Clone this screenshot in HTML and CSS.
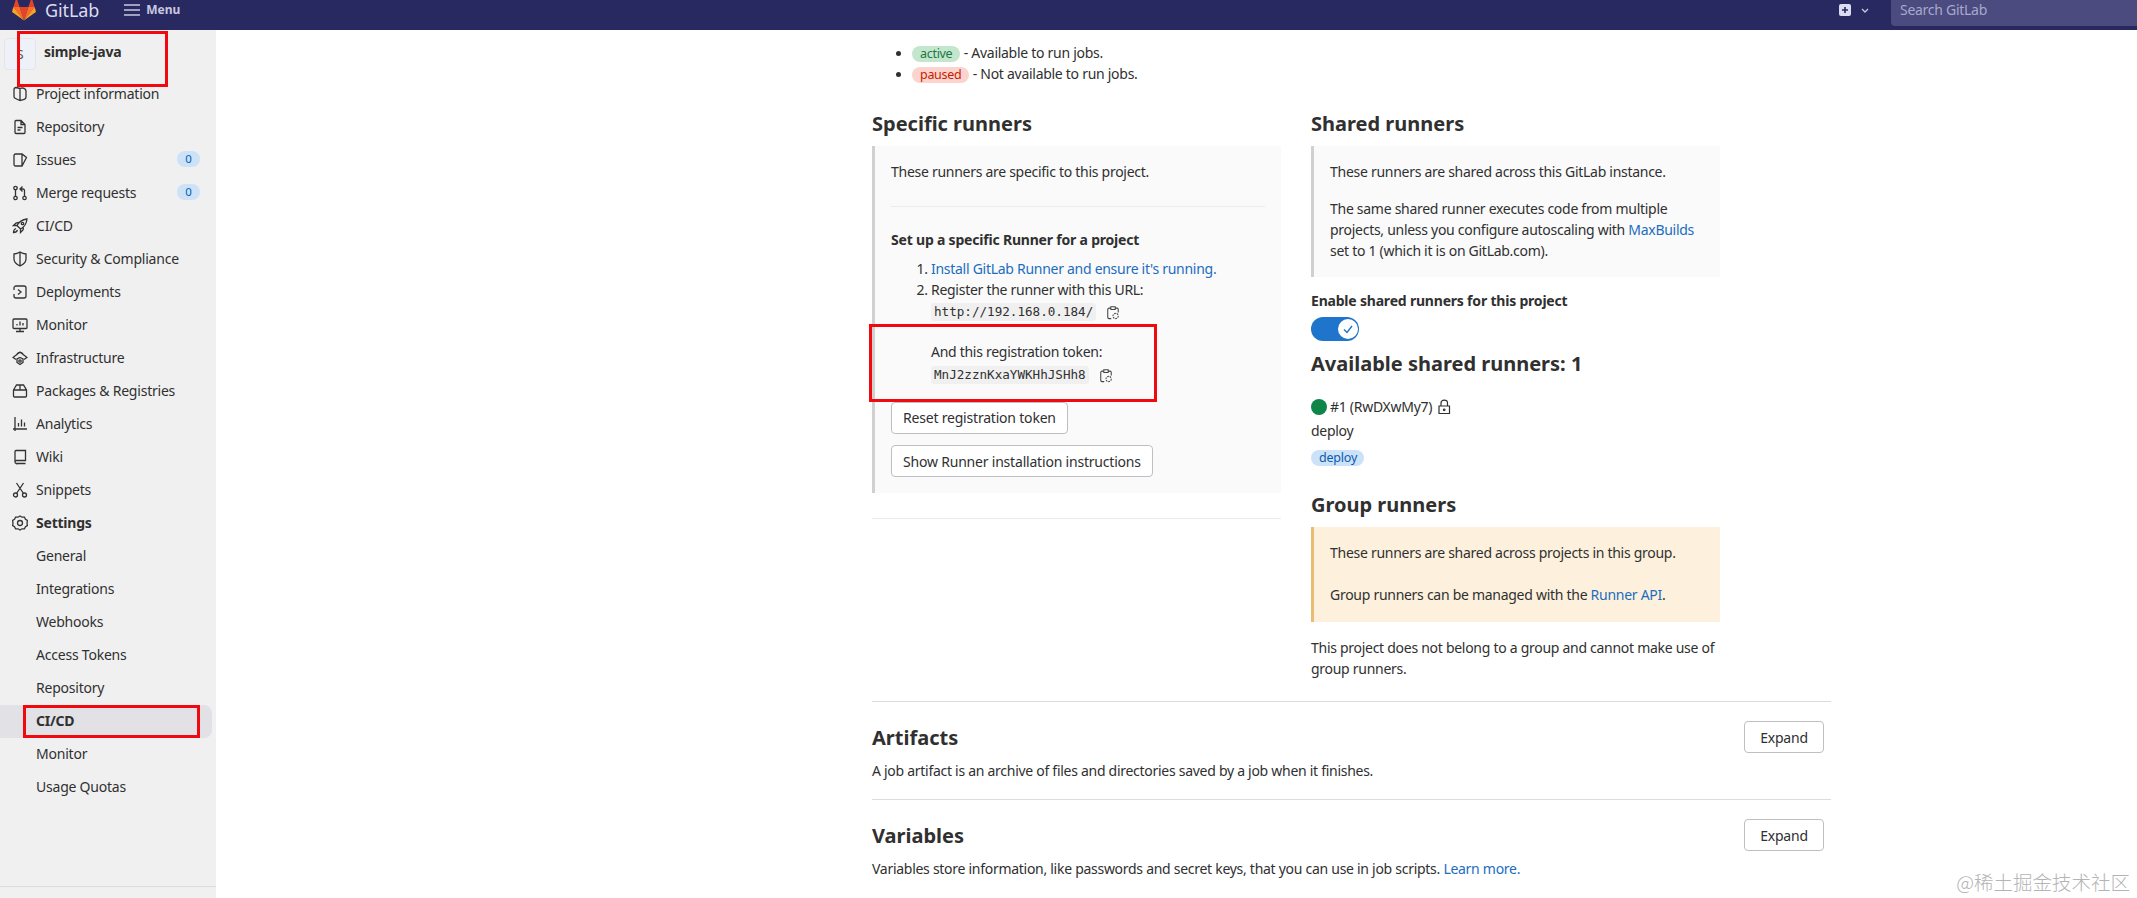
FILE: index.html
```html
<!DOCTYPE html>
<html lang="en">
<head>
<meta charset="utf-8">
<title>CI/CD Settings · simple-java · GitLab</title>
<link rel="stylesheet" href="styles.css">
</head>
<body>
<header class="topbar">
  <svg class="logo" viewBox="0 0 24 22" width="24" height="22">
    <path fill="#e24329" d="M12 21.5 16.4 8H7.6z"/>
    <path fill="#fc6d26" d="M12 21.5 7.6 8H1.4z"/>
    <path fill="#fca326" d="M1.4 8 .1 12.2c-.1.4 0 .8.4 1.1L12 21.5z"/>
    <path fill="#e24329" d="M1.4 8h6.2L4.9-.3c-.1-.4-.7-.4-.9 0z"/>
    <path fill="#fc6d26" d="M12 21.5 16.4 8h6.2z"/>
    <path fill="#fca326" d="m22.6 8 1.3 4.2c.1.4 0 .8-.4 1.1L12 21.5z"/>
    <path fill="#e24329" d="M22.6 8h-6.2l2.7-8.3c.1-.4.7-.4.9 0z"/>
  </svg>
  <span class="brand">GitLab</span>
  <svg class="burger" viewBox="0 0 16 12" width="16" height="12"><path d="M0 1h16M0 6h16M0 11h16" stroke="#c9c8e0" stroke-width="1.5" fill="none"/></svg>
  <span class="menu">Menu</span>
  <span class="spacer"></span>
  <svg class="plus" viewBox="0 0 12 12" width="12" height="12"><rect width="12" height="12" rx="2" fill="#dcdcf0"/><path d="M6 3v6M3 6h6" stroke="#292961" stroke-width="1.6"/></svg>
  <svg class="chev" viewBox="0 0 8 5" width="8" height="5"><path d="m1 1 3 3 3-3" stroke="#c9c8e0" stroke-width="1.3" fill="none"/></svg>
  <div class="search">Search GitLab</div>
</header>

<div class="layout">
  <aside class="sidebar">
    <div class="project">
      <span class="avatar">S</span>
      <strong class="project-name">simple-java</strong>
    </div>
    <nav class="nav">
      <a class="item"><svg class="icon" viewBox="0 0 16 16"><path d="M8 2.5 4 1.5c-1 0-2 .6-2 2v7c0 1 .6 1.7 1.5 2L8 14.5l2.5-.6c2-.5 3.5-1 3.5-3v-6c0-2-1.500-2.500-3.500-3zM8 2.500v12"/></svg>Project information</a>
      <a class="item"><svg class="icon" viewBox="0 0 16 16"><path d="M3 2.500c0-.6.4-1 1-1h5l4 4v8c0 .6-.4 1-1 1H4c-.6 0-1-.4-1-1zM9 1.500v4h4M5.500 8.500h5M5.500 11h3"/></svg>Repository</a>
      <a class="item"><svg class="icon" viewBox="0 0 16 16"><path d="M2 3.500c0-.9.6-1.500 1.500-1.500h6.500l4.500 3.500L10 14H3.500C2.600 14 2 13.400 2 12.500zM10 2v12"/></svg>Issues<span class="count">0</span></a>
      <a class="item"><svg class="icon" viewBox="0 0 16 16"><circle cx="3.500" cy="3" r="1.700"/><circle cx="3.500" cy="13" r="1.700"/><circle cx="12.500" cy="13" r="1.700"/><path d="M3.500 4.700v6.600M12.500 11.300V5.500c0-1-.6-1.500-1.500-1.500H8.500M10.500 1.500 8 4l2.500 2.500"/></svg>Merge requests<span class="count">0</span></a>
      <a class="item"><svg class="icon" viewBox="0 0 16 16"><path d="M5 7.500C7 3.500 10.500 1.500 15 1c-.5 4.500-2.500 8-6.500 10L5 7.500zM5 7.500H1.500L4 5l2.500-.5M8.500 11v3.500L11 12l.5-2.500M4 10.500c-1.500.5-2.500 2-2.500 4 2 0 3.500-1 4-2.500"/><circle cx="10.500" cy="5.500" r="1.200"/></svg>CI/CD</a>
      <a class="item"><svg class="icon" viewBox="0 0 16 16"><path d="M8 1c2 1.200 4 1.800 6 2v5c0 3.500-2.500 5.500-6 7-3.500-1.500-6-3.500-6-7V3c2-.2 4-.8 6-2zM8 1v14"/></svg>Security &amp; Compliance</a>
      <a class="item"><svg class="icon" viewBox="0 0 16 16"><path d="M2 6V4c0-1 .8-2 2-2h8c1.200 0 2 1 2 2v8c0 1.200-.8 2-2 2H4c-1.200 0-2-.8-2-2v-2M6 5.500 9 8l-3 2.500M1 8h0"/></svg>Deployments</a>
      <a class="item"><svg class="icon" viewBox="0 0 16 16"><rect x="1" y="2" width="14" height="9.500" rx="1"/><path d="M8 11.500V14M4 14.500h8M5 8.500V7M8 8.500V4.500M11 8.500V6"/></svg>Monitor</a>
      <a class="item"><svg class="icon" viewBox="0 0 16 16"><path d="M4 9.500 1 7.500 8 2l7 5.500-3 2M8 2.500c2 0 3.500 1.500 3.500 3M4.500 5.500C4.500 4 6 2.500 8 2.500"/><path d="M8 7.500 11 9v3.500l-3 2-3-2V9z"/><circle cx="8" cy="11" r="1.200"/></svg>Infrastructure</a>
      <a class="item"><svg class="icon" viewBox="0 0 16 16"><path d="M1.500 7 4.500 2h7l3 5v6c0 .6-.4 1-1 1h-11c-.6 0-1-.4-1-1zM1.500 7h13M8 2v5"/></svg>Packages &amp; Registries</a>
      <a class="item"><svg class="icon" viewBox="0 0 16 16"><path d="M3 1v14M1 13h14M6.500 10.500V7M9.500 10.500V3.500M12.500 10.500V6.500"/></svg>Analytics</a>
      <a class="item"><svg class="icon" viewBox="0 0 16 16"><path d="M3 13V2.500c0-.6.400-1 1-1h9.500v10H4.500C3.600 11.500 3 12.100 3 13s.6 1.500 1.500 1.500h9M5 14.500v1"/></svg>Wiki</a>
      <a class="item"><svg class="icon" viewBox="0 0 16 16"><circle cx="3.500" cy="13" r="2"/><circle cx="12.500" cy="13" r="2"/><path d="M4.500 1 11.500 11.500M11.500 1 4.500 11.500"/></svg>Snippets</a>
      <a class="item strong"><svg class="icon" viewBox="0 0 16 16"><path d="M8 1l2 1.200 2.400-.1 1.100 2.100 1.900 1.300L15 8l.4 2.500-1.900 1.300-1.100 2.100-2.400-.1L8 15l-2-1.200-2.400.1-1.100-2.100L.6 10.500 1 8 .6 5.500l1.900-1.300 1.100-2.100L6 2.200z"/><circle cx="8" cy="8" r="2.500"/></svg>Settings</a>
      <a class="item sub">General</a>
      <a class="item sub">Integrations</a>
      <a class="item sub">Webhooks</a>
      <a class="item sub">Access Tokens</a>
      <a class="item sub">Repository</a>
      <a class="item sub active">CI/CD</a>
      <a class="item sub">Monitor</a>
      <a class="item sub">Usage Quotas</a>
    </nav>
    <div class="sidebar-foot"></div>
  </aside>

  <main class="main">
    <ul class="states">
      <li><span class="pill green">active</span> - Available to run jobs.</li>
      <li><span class="pill red">paused</span> - Not available to run jobs.</li>
    </ul>

    <div class="columns">
      <section class="col">
        <h3 class="title">Specific runners</h3>
        <div class="note">
          <p class="para">These runners are specific to this project.</p>
          <hr class="rule">
          <p class="para bold">Set up a specific Runner for a project</p>
          <ol class="steps">
            <li><a class="link">Install GitLab Runner and ensure it's running.</a></li>
            <li>Register the runner with this URL:
              <div class="codeline url"><code class="code">http://192.168.0.184/</code><svg class="copy" viewBox="0 0 16 16"><path d="M5 3H3.500C2.700 3 2 3.700 2 4.500v9c0 .8.7 1.500 1.500 1.500H6M11 3h1.500c.8 0 1.500.7 1.500 1.500V8M5.500 1.500h5V4.500h-5z"/><circle cx="11" cy="12" r="3" stroke-dasharray="2 1"/></svg></div>
              <div class="token-label">And this registration token:</div>
              <div class="codeline"><code class="code">MnJ2zznKxaYWKHhJSHh8</code><svg class="copy" viewBox="0 0 16 16"><path d="M5 3H3.500C2.700 3 2 3.700 2 4.500v9c0 .8.7 1.500 1.500 1.500H6M11 3h1.500c.8 0 1.500.7 1.500 1.500V8M5.500 1.500h5V4.500h-5z"/><circle cx="11" cy="12" r="3" stroke-dasharray="2 1"/></svg></div>
            </li>
          </ol>
          <button class="btn first">Reset registration token</button>
          <button class="btn">Show Runner installation instructions</button>
        </div>
        <hr class="rule end">
      </section>

      <section class="col">
        <h3 class="title">Shared runners</h3>
        <div class="note">
          <p class="para">These runners are shared across this GitLab instance.</p>
          <p class="para gap">The same shared runner executes code from multiple projects, unless you configure autoscaling with <a class="link">MaxBuilds</a> set to 1 (which it is on GitLab.com).</p>
        </div>
        <p class="para bold enable">Enable shared runners for this project</p>
        <div class="toggle"><span class="knob"><svg viewBox="0 0 12 12" width="12" height="12"><path d="m2 6.500 3 3 5-6.500" stroke="#1f75cb" stroke-width="1.400" fill="none"/></svg></span></div>
        <h3 class="title avail">Available shared runners: 1</h3>
        <div class="runner"><span class="dot"></span>#1 (RwDXwMy7)<svg class="lock" viewBox="0 0 14 16"><path d="M2 7h10.500v7.500H2zM4 7V4c0-1.500 1.300-2.800 3.200-2.800S10.500 2.500 10.500 4v3"/><circle cx="7.200" cy="10.800" r=".8"/></svg></div>
        <p class="para runner-desc">deploy</p>
        <span class="tag">deploy</span>
        <h3 class="title group">Group runners</h3>
        <div class="note warn">
          <p class="para">These runners are shared across projects in this group.</p>
          <p class="para gap-w">Group runners can be managed with the <a class="link">Runner API</a>.</p>
        </div>
        <p class="para after">This project does not belong to a group and cannot make use of group runners.</p>
      </section>
    </div>

    <section class="setting">
      <div class="setting-head"><h3 class="title">Artifacts</h3><button class="btn expand">Expand</button></div>
      <p class="para desc">A job artifact is an archive of files and directories saved by a job when it finishes.</p>
    </section>
    <section class="setting">
      <div class="setting-head"><h3 class="title">Variables</h3><button class="btn expand">Expand</button></div>
      <p class="para desc">Variables store information, like passwords and secret keys, that you can use in job scripts. <a class="link">Learn more.</a></p>
    </section>
  </main>
</div>

<div class="mark mark-project"></div>
<div class="mark mark-cicd"></div>
<div class="mark mark-token"></div>
<div class="watermark">@稀土掘金技术社区</div>
</body>
</html>
```

FILE: styles.css
```css
* { box-sizing: border-box; }
html, body { height: 100%; }
body {
  margin: 0;
  overflow: hidden;
  height: 898px;
  background: #fff;
  color: #303030;
  font-family: "Noto Sans", "Open Sans", sans-serif;
  font-size: 14px;
  line-height: 21px;
  letter-spacing: -0.28px;
}
.link { color: #1a6dc0; }

.topbar {
  height: 30px;
  background: #292961;
  display: flex;
  align-items: flex-start;
  padding-left: 12px;
  overflow: hidden;
  color: #d1d0e3;
}
.logo { flex: none; margin-top: -1px; }
.brand { margin-left: 9px; font-size: 18px; line-height: 20px; letter-spacing: -0.1px; color: #dcdcef; }
.burger { margin-left: 25px; margin-top: 4px; }
.menu { margin-left: 6px; font-size: 12px; font-weight: 700; line-height: 20px; letter-spacing: 0; color: #c9c8e0; }
.spacer { flex: 1; }
.plus { margin-top: 4px; }
.chev { margin-left: 10px; margin-top: 8px; }
.search {
  width: 246px;
  height: 26px;
  margin-left: 22px;
  padding-left: 9px;
  background: #4b4b80;
  border-radius: 0 0 0 4px;
  color: #a8a8cc;
  line-height: 20px;
}

.layout { display: flex; height: 868px; }

.sidebar {
  width: 216px;
  flex: none;
  background: #f0f0f0;
  display: flex;
  flex-direction: column;
}
.project {
  height: 47.5px;
  padding: 8px 0 0 4px;
  display: flex;
  align-items: flex-start;
}
.avatar {
  width: 32px;
  height: 32px;
  background: #eef2f8;
  border: 1px solid #e2e5ea;
  border-radius: 4px;
  display: flex;
  align-items: center;
  justify-content: center;
  font-size: 13px;
  color: #555;
}
.project-name { margin-left: 8px; line-height: 32px; margin-top: -2px; letter-spacing: -0.2px; }
.nav { display: flex; flex-direction: column; }
.item {
  height: 33px;
  display: flex;
  align-items: center;
  padding: 0 16px 2px 36px;
  position: relative;
  white-space: nowrap;
  color: #303030;
  letter-spacing: -0.22px;
}
.icon {
  position: absolute;
  left: 12px;
  top: 8px;
  width: 16px;
  height: 16px;
  fill: none;
  stroke: #333;
  stroke-width: 1.300;
}
.strong { font-weight: 700; }
.active {
  font-weight: 700;
  background: #e1e1e6;
  border-radius: 0 8px 8px 0;
  margin-right: 4px;
}
.count {
  margin-left: auto;
  width: 23px;
  height: 16px;
  border-radius: 8px;
  background: #cbe2f9;
  color: #0b5cad;
  font-size: 11.500px;
  line-height: 16px;
  text-align: center;
}
.sidebar-foot { margin-top: auto; height: 12px; border-top: 1px solid #dcdcde; }

.main { flex: 1; padding: 12px 306px 0 656px; min-width: 0; }
.states { margin: 0; padding: 0 0 0 40px; }
.states li::marker { font-size: 13px; }
.pill {
  display: inline-block;
  height: 16px;
  padding: 0 8px;
  border-radius: 8px;
  font-size: 12.500px;
  line-height: 15px;
  letter-spacing: -0.3px;
}
.green { background: #c3e6cd; color: #217645; }
.red { background: #fdd4cd; color: #c91c00; }
.tag {
  display: block;
  width: 53px;
  height: 16px;
  padding-left: 8px;
  border-radius: 8px;
  font-size: 12.500px;
  line-height: 15px;
  letter-spacing: -0.2px;
  background: #cbe2f9;
  color: #0b5cad;
}

.columns { display: grid; grid-template-columns: 409px 409px; column-gap: 30px; }
.title {
  margin: 0;
  font-size: 20px;
  line-height: 28px;
  font-weight: 700;
  color: #303030;
  letter-spacing: 0;
}
.col > .title:first-child { margin-top: 25.500px; }
.note {
  margin-top: 8px;
  padding: 15px 16px 16px 16px;
  background: #fafafa;
  border-left: 3px solid #d0d0d0;
}
.para { margin: 0; }
.bold { font-weight: 700; letter-spacing: -0.2px; }
.gap { margin-top: 16px; }
.gap-w { margin-top: 21px; }
.rule { border: 0; border-top: 1px solid #ececec; margin: 24px 0 22px; }
.steps { margin: 8px 0 0; padding: 0 0 0 40px; }
.codeline { display: flex; align-items: center; height: 21px; }
.url { margin-top: 2px; }
.code {
  font-family: "DejaVu Sans Mono", monospace;
  font-size: 12.600px;
  letter-spacing: 0;
  line-height: 18px;
  background: #f0f0f0;
  padding: 0 3px;
  border-radius: 3px;
}
.copy {
  width: 14px;
  height: 15px;
  margin-left: 10px;
  fill: none;
  stroke: #444;
  stroke-width: 1.200;
}
.token-label { margin-top: 18px; }
.token-label + .codeline { margin-top: 3px; }
.btn {
  display: block;
  height: 32px;
  padding: 0 11px;
  margin-top: 11.500px;
  background: #fff;
  border: 1px solid #bfbfc3;
  border-radius: 4px;
  font: inherit;
  letter-spacing: -0.2px;
  color: #303030;
}
.first { margin-top: 16px; }
.rule.end { margin: 25px 0 0; }

.enable { margin-top: 13px; }
.toggle {
  width: 48px;
  height: 24px;
  margin-top: 6.500px;
  padding: 2px 1px 2px 0;
  border-radius: 12px;
  background: #1f75cb;
  display: flex;
  justify-content: flex-end;
}
.knob {
  width: 20px;
  height: 20px;
  border-radius: 50%;
  background: #fff;
  display: flex;
  align-items: center;
  justify-content: center;
}
.avail { margin-top: 9px; }
.runner { margin-top: 18px; display: flex; align-items: center; }
.dot { width: 16px; height: 16px; border-radius: 50%; background: #108548; margin-right: 3px; }
.lock { width: 14px; height: 16px; margin-left: 5px; fill: none; stroke: #303030; stroke-width: 1.200; }
.runner-desc { margin-top: 3px; }
.runner-desc + .tag { margin-top: 9px; }
.group { margin-top: 25px; }
.warn { margin-top: 8px; padding-bottom: 17px; background: #fdf1dd; border-left-color: #e9be74; }
.after { margin-top: 15px; }

.setting { border-top: 1px solid #dcdcde; margin-top: 22px; height: 98px; padding-top: 19px; }
.setting + .setting { margin-top: 0; }
.setting-head { display: flex; justify-content: space-between; align-items: flex-start; height: 38.500px; padding-right: 7px; }
.setting-head .title { margin-top: 3px; }
.expand { margin-top: 0; width: 80px; padding: 0; }
.desc { margin-top: 0; }

.mark { position: absolute; border: 3px solid #f00a0f; }
.mark-project { left: 17px; top: 31px; width: 151px; height: 56px; }
.mark-cicd { left: 23px; top: 705px; width: 177px; height: 33px; }
.mark-token { left: 869px; top: 324px; width: 288px; height: 78px; }

.watermark {
  position: absolute;
  right: 7px;
  top: 870px;
  font-family: "Noto Sans CJK SC", sans-serif;
  font-size: 19.500px;
  font-weight: 300;
  line-height: 24px;
  letter-spacing: 0;
  color: #b4b4b4;
}
```
